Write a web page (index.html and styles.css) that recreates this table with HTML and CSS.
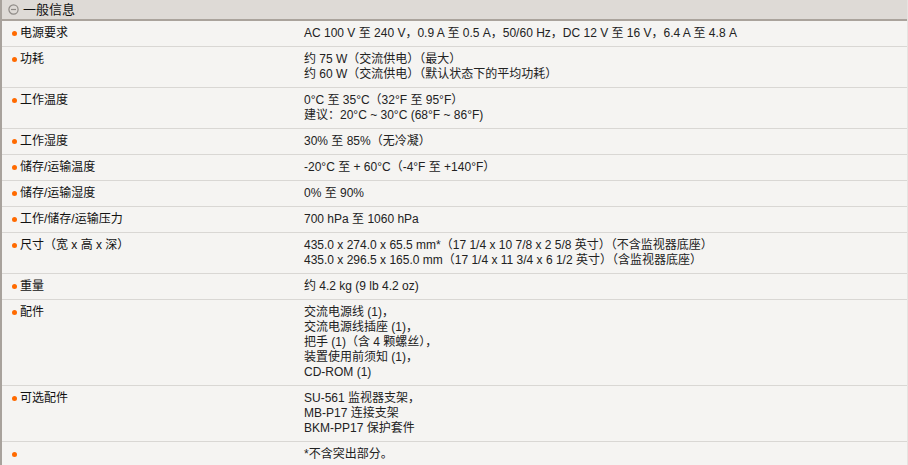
FILE: index.html
```html
<!DOCTYPE html>
<html lang="zh-CN">
<head>
<meta charset="utf-8">
<title>一般信息</title>
<link rel="stylesheet" href="styles.css">
</head>
<body>
<div class="spec">
  <div class="spec-head">
    <svg class="toggle" width="11" height="11" viewBox="0 0 11 11"><circle cx="5.5" cy="5.5" r="4.6" fill="none" stroke="#8e8a86" stroke-width="1.2"/><line x1="3" y1="5.5" x2="8" y2="5.5" stroke="#8e8a86" stroke-width="1.2"/></svg>
    <span>一般信息</span>
  </div>
  <div class="row"><div class="label">电源要求</div><div class="value">AC 100 V 至 240 V，0.9 A 至 0.5 A，50/60 Hz，DC 12 V 至 16 V，6.4 A 至 4.8 A</div></div>
  <div class="row"><div class="label">功耗</div><div class="value">约 75 W（交流供电）（最大）<br>约 60 W（交流供电）（默认状态下的平均功耗）</div></div>
  <div class="row"><div class="label">工作温度</div><div class="value">0°C 至 35°C（32°F 至 95°F）<br>建议：20°C ~ 30°C (68°F ~ 86°F)</div></div>
  <div class="row"><div class="label">工作湿度</div><div class="value">30% 至 85%（无冷凝）</div></div>
  <div class="row"><div class="label">储存/运输温度</div><div class="value">-20°C 至 + 60°C（-4°F 至 +140°F）</div></div>
  <div class="row"><div class="label">储存/运输湿度</div><div class="value">0% 至 90%</div></div>
  <div class="row"><div class="label">工作/储存/运输压力</div><div class="value">700 hPa 至 1060 hPa</div></div>
  <div class="row"><div class="label">尺寸（宽 x 高 x 深）</div><div class="value">435.0 x 274.0 x 65.5 mm*（17 1/4 x 10 7/8 x 2 5/8 英寸）（不含监视器底座）<br>435.0 x 296.5 x 165.0 mm（17 1/4 x 11 3/4 x 6 1/2 英寸）（含监视器底座）</div></div>
  <div class="row"><div class="label">重量</div><div class="value">约 4.2 kg (9 lb 4.2 oz)</div></div>
  <div class="row"><div class="label">配件</div><div class="value">交流电源线 (1)，<br>交流电源线插座 (1)，<br>把手 (1)（含 4 颗螺丝），<br>装置使用前须知 (1)，<br>CD-ROM (1)</div></div>
  <div class="row"><div class="label">可选配件</div><div class="value">SU-561 监视器支架，<br>MB-P17 连接支架<br>BKM-PP17 保护套件</div></div>
  <div class="row"><div class="label"></div><div class="value">*不含突出部分。</div></div>
</div>
</body>
</html>
```

FILE: styles.css
```css
html, body {
  margin: 0;
  padding: 0;
  background: #ffffff;
}
body {
  font-family: "Liberation Sans", Arial, "Noto Sans CJK SC", sans-serif;
  font-size: 12px;
  line-height: 15px;
  color: #111;
}
.spec {
  width: 905px;
  border-left: 2px solid #a8a29c;
  border-right: 1px solid #e6e3e0;
  background: #f5f4f2;
}
.spec-head {
  height: 19px;
  background: #dedad6;
  border-bottom: 2px solid #aaa39c;
  display: flex;
  align-items: center;
  padding-left: 6px;
  gap: 4px;
  line-height: 16px;
  font-size: 13px;
  color: #111;
}
.toggle {
  display: block;
}
.row {
  display: grid;
  grid-template-columns: 302px 1fr;
  border-bottom: 1px solid #d9d7d4;
}
.row:last-child {
  border-bottom: none;
}
.label {
  padding: 5px 0 5px 18px;
  position: relative;
  color: #111;
}
.label::before {
  content: "";
  position: absolute;
  left: 10px;
  top: 10px;
  width: 5px;
  height: 5px;
  border-radius: 50%;
  background: #ff6a00;
}
.value {
  padding: 5px 0;
  color: #222;
}
```
